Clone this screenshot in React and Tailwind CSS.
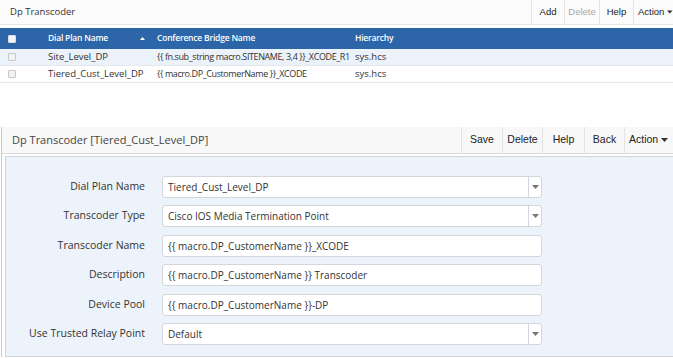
const OPEN = { fontFamily: '"Open Sans", "Liberation Sans", sans-serif' };
const ARIAL = { fontFamily: '"Liberation Sans", Arial, sans-serif' };

const ROWS = [
  {
    name: "Site_Level_DP",
    bridge: "{{ fn.sub_string macro.SITENAME, 3,4 }}_XCODE_R1",
    hier: "sys.hcs",
  },
  {
    name: "Tiered_Cust_Level_DP",
    bridge: "{{ macro.DP_CustomerName }}_XCODE",
    hier: "sys.hcs",
  },
];

const FIELDS = [
  { label: "Dial Plan Name", value: "Tiered_Cust_Level_DP", select: true },
  { label: "Transcoder Type", value: "Cisco IOS Media Termination Point", select: true },
  { label: "Transcoder Name", value: "{{ macro.DP_CustomerName }}_XCODE" },
  { label: "Description", value: "{{ macro.DP_CustomerName }} Transcoder" },
  { label: "Device Pool", value: "{{ macro.DP_CustomerName }}-DP" },
  { label: "Use Trusted Relay Point", value: "Default", select: true },
];

function Caret({ className = "" }) {
  return (
    <svg width="7" height="4" viewBox="0 0 7 4" className={className}>
      <polygon points="0,0 7,0 3.5,4" fill="currentColor" />
    </svg>
  );
}

function ToolButton({ label, muted, caret, className = "" }) {
  return (
    <div
      className={`flex items-center gap-[3px] border-l border-[#e3e3e3] whitespace-nowrap ${className} ${
        muted ? "text-[#a8a8a8]" : "text-[#222]"
      }`}
      style={ARIAL}
    >
      {label}
      {caret && <Caret className="text-[#333]" />}
    </div>
  );
}

function Checkbox({ header }) {
  return (
    <div
      className={`w-[8px] h-[8px] rounded-[1px] border ${
        header ? "bg-[#f3f5f8] border-[#d8dde5]" : "bg-[#f2f2f2] border-[#c8c8c8]"
      }`}
    />
  );
}

function FormRow({ label, value, select }) {
  return (
    <div className="flex items-center h-[29.5px]">
      <div className="w-[139px] text-right text-[10.5px] text-[#333] whitespace-nowrap">
        {label}
      </div>
      <div className="ml-[17px] w-[380px] h-[22px] bg-white border border-[#d3d6db] rounded-[3px] flex items-center">
        <div className="flex-1 pl-[5px] text-[10px] text-[#333] pt-[1px] whitespace-nowrap overflow-hidden">
          {value}
        </div>
        {select && (
          <div className="w-[13px] h-full border-l border-[#d3d6db] flex items-center justify-center">
            <Caret className="text-[#777]" />
          </div>
        )}
      </div>
    </div>
  );
}

export default function App() {
  return (
    <div className="w-[673px] h-[358px] bg-white overflow-hidden" style={OPEN}>
      {/* List view */}
      <div className="h-[25px] flex items-stretch justify-between bg-[#fbfbfb] border-b border-[#e6e6e6]">
        <div className="pl-[10px] flex items-center text-[9.5px] text-[#333]">
          Dp Transcoder
        </div>
        <div className="flex items-stretch text-[9.5px]">
          <ToolButton label="Add" className="w-[33px] justify-center" />
          <ToolButton label="Delete" muted className="w-[35px] justify-center" />
          <ToolButton label="Help" className="w-[34px] justify-center" />
          <ToolButton label="Action" caret className="w-[40px] pl-[4px]" />
        </div>
      </div>

      <div className="mt-[3px]">
        <div className="h-[21px] bg-[#2c66a8] text-white flex items-center font-semibold text-[8.5px] tracking-[-0.2px]">
          <div className="w-[48px] pl-[8px]">
            <Checkbox header />
          </div>
          <div className="w-[109px] flex items-center justify-between pr-[12px]">
            Dial Plan Name
            <Caret className="rotate-180 text-white w-[5px] h-[3px]" />
          </div>
          <div className="w-[198px]">Conference Bridge Name</div>
          <div>Hierarchy</div>
        </div>
        {ROWS.map((r, i) => (
          <div
            key={r.name}
            className={`h-[17px] flex items-center text-[#333] text-[9.5px] border-b border-[#e4e7eb] ${
              i === 0 ? "bg-[#ebf2fa]" : "bg-white"
            }`}
          >
            <div className="w-[48px] pl-[8px]">
              <Checkbox />
            </div>
            <div className="w-[109px]">{r.name}</div>
            <div className="w-[198px] whitespace-nowrap text-[9px] tracking-[-0.4px]">
              {r.bridge}
            </div>
            <div>{r.hier}</div>
          </div>
        ))}
      </div>

      {/* Detail view */}
      <div className="mt-[44px] ml-[1px] border-l border-[#c9c9c9] h-[230px] flex flex-col">
        <div className="h-[27px] flex items-stretch justify-between bg-[#f8f8f8] border-b border-[#dcdcdc]">
          <div className="pl-[10px] flex items-center text-[11px] text-[#444]">
            Dp Transcoder [Tiered_Cust_Level_DP]
          </div>
          <div className="flex items-stretch text-[10.5px]">
            <ToolButton label="Save" className="w-[41px] justify-center" />
            <ToolButton label="Delete" className="w-[40px] justify-center" />
            <ToolButton label="Help" className="w-[42px] justify-center" />
            <ToolButton label="Back" className="w-[40px] justify-center" />
            <ToolButton label="Action" caret className="w-[49px] pl-[4px]" />
          </div>
        </div>
        <div className="mt-[2px] ml-[3px] flex-1 bg-[#edf3fa] border-l border-t border-b border-[#d0d4d9] pt-[15px]">
          {FIELDS.map((f) => (
            <FormRow key={f.label} {...f} />
          ))}
        </div>
      </div>
    </div>
  );
}
